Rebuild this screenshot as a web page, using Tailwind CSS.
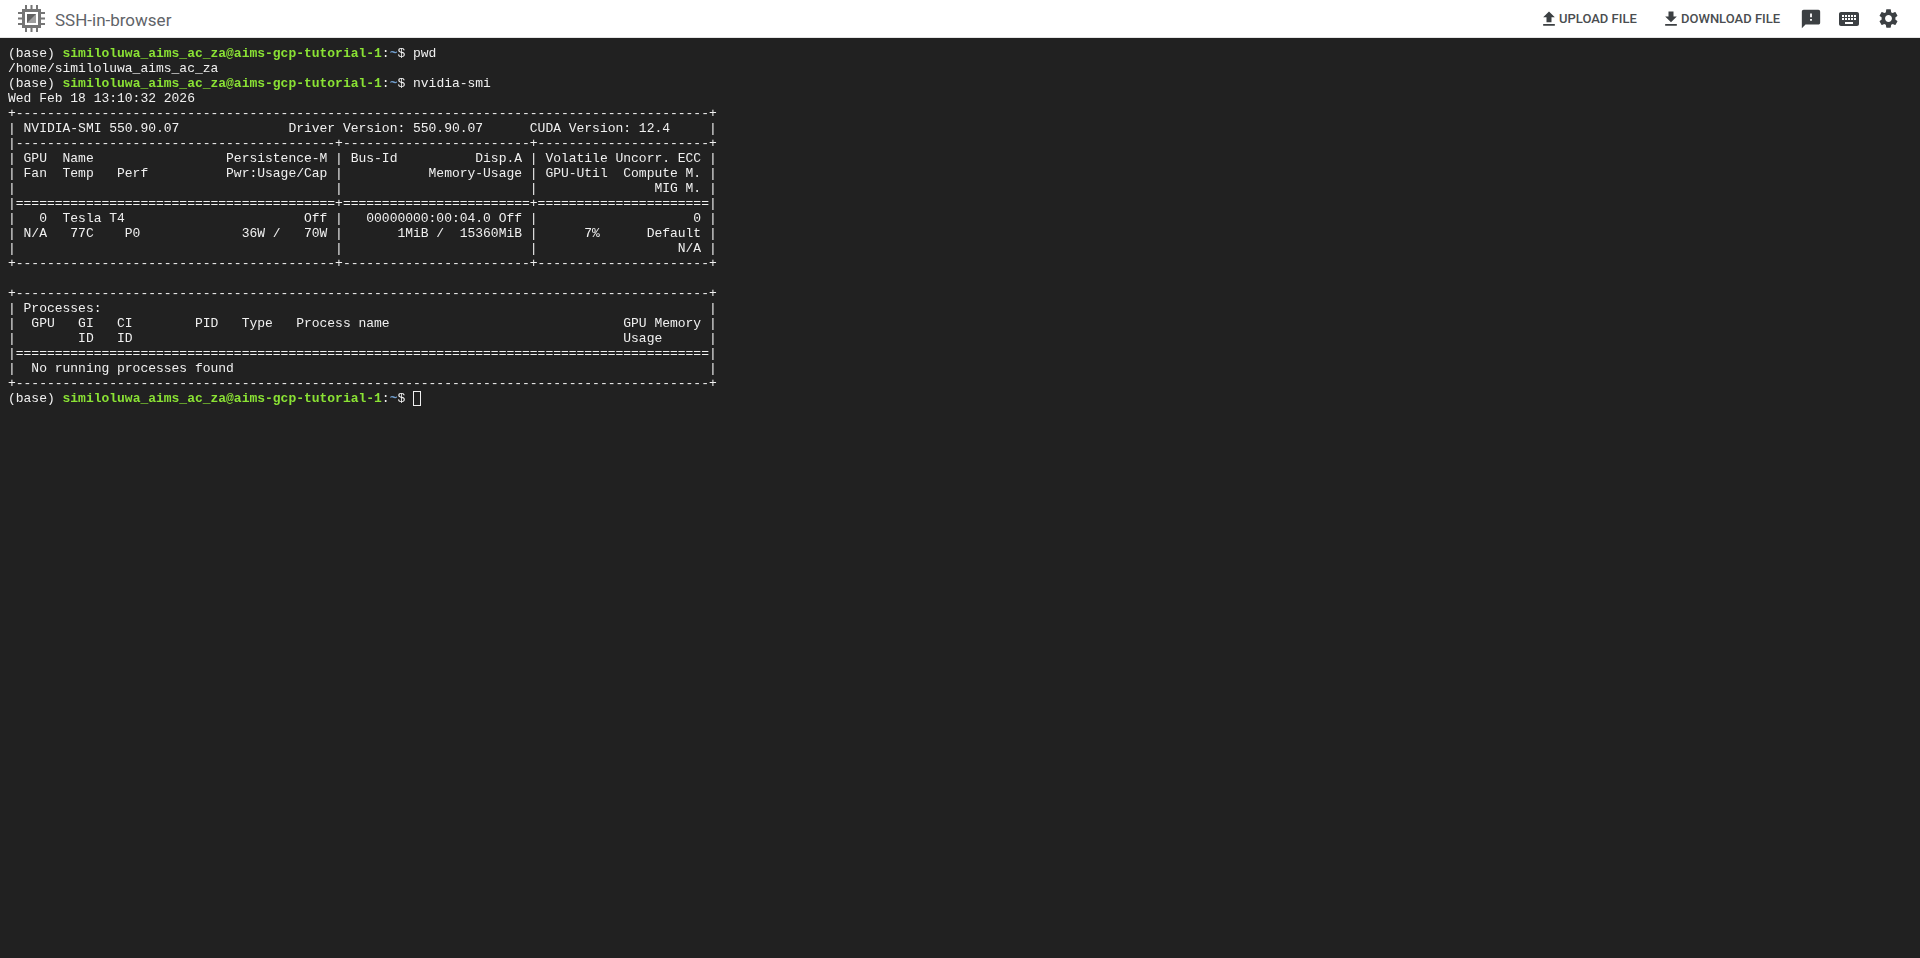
<!DOCTYPE html>
<html lang="en">
<head>
  <meta charset="UTF-8">
  <title>SSH-in-browser</title>
  <script src="https://cdn.jsdelivr.net/npm/@tailwindcss/browser@4"></script>
</head>
<body class="bg-[#212121] h-[958px] overflow-hidden">

  <header class="h-[38px] bg-white flex items-center justify-between border-b border-[#e5e5e5]">
    <div class="flex items-center">
      <svg class="ml-[18px] w-[27px] h-[27px]" viewBox="0 0 27 27">
        <path fill="#757575" d="M4 4h19v19H4z"/>
        <path fill="#fff" d="M7 7h13v13H7z"/>
        <path fill="#616161" d="M9 9h9v9H9z"/>
        <path fill="#9e9e9e" d="M9 18l9-9v9z"/>
        <path stroke="#757575" stroke-width="2" d="M8 0v4M13.5 0v4M19 0v4M8 23v4M13.5 23v4M19 23v4M0 8h4M0 13.5h4M0 19h4M23 8h4M23 13.5h4M23 19h4"/>
      </svg>
      <span class="ml-[10px] mt-[4px] font-['Roboto',sans-serif] text-[17px] text-[#5f6368]">SSH-in-browser</span>
    </div>
    <div class="flex items-center font-['Roboto',sans-serif] text-[13px] font-medium text-[#4a4d50] whitespace-nowrap">
      <svg class="w-[20px] h-[20px]" viewBox="0 0 24 24" fill="#3c4043"><path d="M9 16h6v-6h4l-7-7-7 7h4zm-4 2h14v2H5z"/></svg>
      <span class="w-[78px]">UPLOAD FILE</span>
      <svg class="ml-[24px] w-[20px] h-[20px]" viewBox="0 0 24 24" fill="#3c4043"><path d="M19 9h-4V3H9v6H5l7 7 7-7zM5 18v2h14v-2H5z"/></svg>
      <span class="w-[99px]">DOWNLOAD FILE</span>
      <svg class="ml-[20px] w-[22px] h-[22px]" viewBox="0 0 24 24" fill="#3c4043"><path d="M20 2H4c-1.1 0-2 .9-2 2v18l4-4h14c1.1 0 2-.9 2-2V4c0-1.1-.9-2-2-2zm-7 12h-2v-2h2v2zm0-4h-2V6h2v4z"/></svg>
      <svg class="ml-[15px] w-[24px] h-[24px]" viewBox="0 0 24 24" fill="#3c4043"><path d="M20 5H4c-1.1 0-1.99.9-1.99 2L2 17c0 1.1.9 2 2 2h16c1.1 0 2-.9 2-2V7c0-1.1-.9-2-2-2zm-9 3h2v2h-2V8zm0 3h2v2h-2v-2zM8 8h2v2H8V8zm0 3h2v2H8v-2zm-1 2H5v-2h2v2zm0-3H5V8h2v2zm9 7H8v-2h8v2zm0-4h-2v-2h2v2zm0-3h-2V8h2v2zm3 3h-2v-2h2v2zm0-3h-2V8h2v2z"/></svg>
      <svg class="ml-[16px] mr-[20px] w-[23px] h-[23px]" viewBox="0 0 24 24" fill="#3c4043"><path d="M19.14 12.94c.04-.3.06-.61.06-.94 0-.32-.02-.64-.07-.94l2.03-1.58c.18-.14.23-.41.12-.61l-1.92-3.32c-.12-.22-.37-.29-.59-.22l-2.39.96c-.5-.38-1.03-.7-1.62-.94l-.36-2.54c-.04-.24-.24-.41-.48-.41h-3.84c-.24 0-.43.17-.47.41l-.36 2.54c-.59.24-1.13.57-1.62.94l-2.39-.96c-.22-.08-.47 0-.59.22L2.74 8.87c-.12.21-.08.47.12.61l2.03 1.58c-.05.3-.09.63-.09.94s.02.64.07.94l-2.03 1.58c-.18.14-.23.41-.12.61l1.92 3.32c.12.22.37.29.59.22l2.39-.96c.5.38 1.03.7 1.62.94l.36 2.54c.05.24.24.41.48.41h3.84c.24 0 .44-.17.47-.41l.36-2.54c.59-.24 1.13-.56 1.62-.94l2.39.96c.22.08.47 0 .59-.22l1.92-3.32c.12-.22.07-.47-.12-.61l-2.01-1.58zM12 15.6c-1.98 0-3.6-1.62-3.6-3.6s1.62-3.6 3.6-3.6 3.6 1.62 3.6 3.6-1.62 3.6-3.6 3.6z"/></svg>
    </div>
  </header>

  <pre class="will-change-transform pl-[8px] pt-[8px] font-['Liberation_Mono',monospace] text-[13px] leading-[15px] tracking-[-0.013px] text-[#f0f0f0]">(base) <b class="text-[#8ae234]">similoluwa_aims_ac_za@aims-gcp-tutorial-1</b>:<b class="text-[#729fcf]">~</b>$ pwd
/home/similoluwa_aims_ac_za
(base) <b class="text-[#8ae234]">similoluwa_aims_ac_za@aims-gcp-tutorial-1</b>:<b class="text-[#729fcf]">~</b>$ nvidia-smi
Wed Feb 18 13:10:32 2026
+-----------------------------------------------------------------------------------------+
| NVIDIA-SMI 550.90.07              Driver Version: 550.90.07      CUDA Version: 12.4     |
|-----------------------------------------+------------------------+----------------------+
| GPU  Name                 Persistence-M | Bus-Id          Disp.A | Volatile Uncorr. ECC |
| Fan  Temp   Perf          Pwr:Usage/Cap |           Memory-Usage | GPU-Util  Compute M. |
|                                         |                        |               MIG M. |
|=========================================+========================+======================|
|   0  Tesla T4                       Off |   00000000:00:04.0 Off |                    0 |
| N/A   77C    P0             36W /   70W |       1MiB /  15360MiB |      7%      Default |
|                                         |                        |                  N/A |
+-----------------------------------------+------------------------+----------------------+

+-----------------------------------------------------------------------------------------+
| Processes:                                                                              |
|  GPU   GI   CI        PID   Type   Process name                              GPU Memory |
|        ID   ID                                                               Usage      |
|=========================================================================================|
|  No running processes found                                                             |
+-----------------------------------------------------------------------------------------+
(base) <b class="text-[#8ae234]">similoluwa_aims_ac_za@aims-gcp-tutorial-1</b>:<b class="text-[#729fcf]">~</b>$ <span class="inline-block w-[8px] h-[15px] align-top border border-[#f0f0f0]"></span></pre>

</body>
</html>
